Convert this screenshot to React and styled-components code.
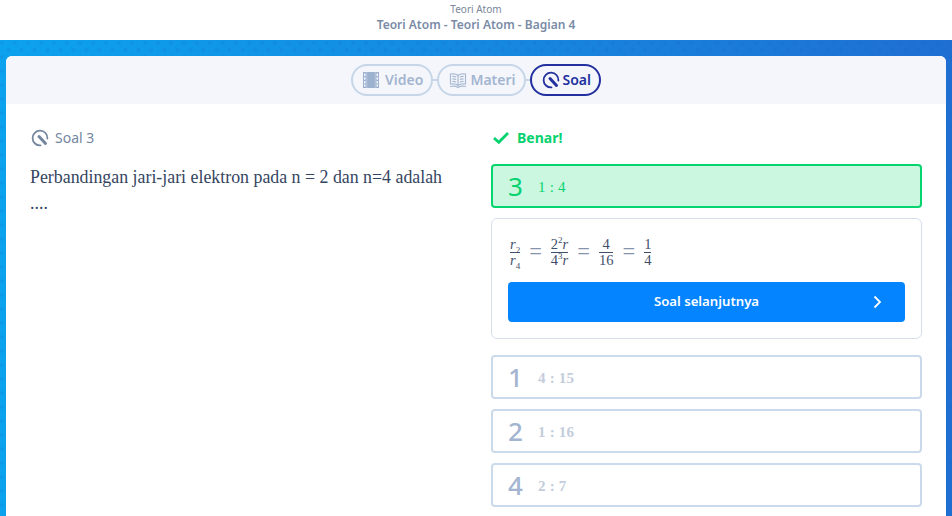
import React from 'react';
import styled, { createGlobalStyle } from 'styled-components';

const GlobalStyle = createGlobalStyle`
  html, body {
    margin: 0;
    padding: 0;
    height: 516px;
    overflow: hidden;
    background: #fff;
    font-family: 'Noto Sans', 'Open Sans', sans-serif;
  }
`;

const Page = styled.div`
  width: 952px;
  height: 516px;
  overflow: hidden;
  display: flex;
  flex-direction: column;
`;

const Header = styled.header`
  height: 40px;
  flex: none;
  background: #fff;
  display: flex;
  flex-direction: column;
  align-items: center;
  padding-top: 2px;
  box-sizing: border-box;
`;

const Crumb = styled.div`
  font-size: 10px;
  line-height: 14px;
  color: #7b8799;
`;

const Title = styled.h1`
  margin: 0;
  font-size: 12px;
  line-height: 18px;
  font-weight: 600;
  color: #7a8ba6;
`;

const Stage = styled.main`
  flex: 1;
  min-height: 0;
  padding: 16px 6px 0;
  background-image:
    radial-gradient(circle at center, rgba(20, 90, 190, 0.13) 0 1.5px, transparent 2.5px),
    radial-gradient(circle at center, rgba(20, 90, 190, 0.13) 0 1.5px, transparent 2.5px),
    linear-gradient(90deg, #0ca2ee, #1f6fd2);
  background-size: 13px 14px, 13px 14px, 100% 100%;
  background-position: 8.5px -4px, 15px 3px, 0 0;
`;

const Card = styled.section`
  height: 100%;
  background: #fff;
  border-radius: 6px 6px 0 0;
  overflow: hidden;
`;

const TabBar = styled.nav`
  height: 48px;
  background: #f4f6fb;
  display: flex;
  align-items: center;
  justify-content: center;
`;

const Tab = styled.div`
  height: 32px;
  box-sizing: border-box;
  border: 2px solid ${p => (p.$active ? '#23309f' : '#c6d6e8')};
  border-radius: 16px;
  padding: 0 8px 2px 10px;
  display: flex;
  align-items: center;
  gap: ${p => p.$gap}px;
  font-size: 14px;
  font-weight: 600;
  color: ${p => (p.$active ? '#23309f' : '#a3b5d0')};
  & svg {
    margin-top: 2px;
  }
`;

const Connector = styled.span`
  width: 4px;
  height: 2px;
  background: #c6d6e8;
`;

const Columns = styled.div`
  display: grid;
  grid-template-columns: 431px 431px;
  column-gap: 30px;
  padding: 24px 24px 0;
`;

const SoalLabel = styled.div`
  height: 20px;
  box-sizing: border-box;
  padding-bottom: 2px;
  margin-left: 1px;
  display: flex;
  align-items: center;
  gap: 6px;
  font-size: 14px;
  color: #74879f;
  & svg {
    margin-top: 2px;
  }
`;

const Question = styled.p`
  margin: 16px 0 0;
  font-family: 'Liberation Serif', serif;
  font-size: 17.85px;
  line-height: 26px;
  color: #34455f;
`;

const Status = styled.div`
  height: 20px;
  box-sizing: border-box;
  padding-bottom: 2px;
  display: flex;
  align-items: center;
  gap: 8px;
  margin-left: 2px;
  font-size: 14px;
  font-weight: 700;
  color: #06d26f;
  & svg {
    margin-top: 2px;
  }
`;

const Answer = styled.div`
  height: 44px;
  box-sizing: border-box;
  margin-top: ${p => p.$mt}px;
  border: 2px solid ${p => (p.$correct ? '#06d56f' : '#cbdaeb')};
  border-radius: 4px;
  background: ${p => (p.$correct ? '#cbf7e1' : '#fff')};
  display: flex;
  align-items: center;
  padding-left: 15px;
  color: ${p => (p.$correct ? '#06d26f' : '#a3b5d0')};
`;

const AnswerKey = styled.span`
  width: 30px;
  font-size: 26px;
  line-height: 32px;
  font-weight: ${p => (p.$correct ? 400 : 500)};
`;

const AnswerText = styled.span`
  padding-top: 2px;
  font-family: 'Liberation Serif', serif;
  font-size: 15px;
  font-weight: ${p => (p.$correct ? 400 : 700)};
  letter-spacing: 0.2px;
  color: ${p => (p.$correct ? '#06d26f' : '#c3cddc')};
`;

const Explain = styled.div`
  margin-top: 10px;
  height: 121px;
  box-sizing: border-box;
  border: 1px solid #d5dfeb;
  border-radius: 6px;
  padding: 16px;
  display: flex;
  flex-direction: column;
`;

const Formula = styled.div`
  height: 32px;
  margin-top: 1px;
  padding-left: 2px;
  display: flex;
  align-items: center;
  gap: 9px;
  font-family: 'Liberation Serif', serif;
  font-size: 14.5px;
  color: #3f4f6b;
`;

const Frac = styled.span`
  display: inline-flex;
  flex-direction: column;
  align-items: center;
  line-height: 14px;
  & > span:first-child {
    border-bottom: 1px solid #3f4f6b;
    padding: 0 0 1px;
    align-self: stretch;
    text-align: center;
  }
`;

const Equals = styled.span`
  font-size: 22.5px;
  line-height: 20px;
  color: #8795aa;
`;

const Italic = styled.i`
  font-style: italic;
`;

const Sub = styled.sub`
  font-size: 9px;
  line-height: 0;
`;

const Sup = styled.sup`
  font-size: 9px;
  line-height: 0;
`;

const NextButton = styled.button`
  margin-top: 15px;
  height: 40px;
  flex: none;
  border: 0;
  border-radius: 4px;
  background: #0584ff;
  color: #fff;
  font-family: inherit;
  font-size: 13.2px;
  font-weight: 600;
  display: grid;
  grid-template-columns: 24px 1fr 24px;
  align-items: center;
  padding: 0 16px 2px;
  text-align: center;
  & svg {
    justify-self: center;
    margin-top: 2px;
  }
`;

const SoalIcon = ({ color, size = 18 }) => (
  <svg width={size} height={size} viewBox="0 0 18 18" fill="none">
    <path d="M9.500 16.400A7.400 7.400 0 1 1 16.400 9.500" stroke={color} strokeWidth="1.800" strokeLinecap="round" />
    <path d="M8 7.500L14.500 14.500" stroke={color} strokeWidth="3" strokeLinecap="round" />
  </svg>
);

const FilmIcon = () => (
  <svg width="16" height="16" viewBox="0 0 16 16">
    <path
      fill="#9db2cf"
      fillRule="evenodd"
      d="M0 0h16v16H0zM1 1.500v2.500h1.500V1.500zM1 5.200v2.500h1.500V5.200zM1 8.900v2.500h1.500V8.900zM1 12.500v2h1.500v-2zM13.500 1.500v2.500H15V1.500zM13.500 5.200v2.500H15V5.200zM13.500 8.900v2.500H15V8.900zM13.500 12.500v2H15v-2z"
    />
    <path fill="#c2d0e3" d="M3.500 0h.7v16h-.7zM11.800 0h.7v16h-.7z" />
  </svg>
);

const BookIcon = () => (
  <svg width="18" height="18" viewBox="0 0 18 18" fill="none" stroke="#a9bad3" strokeWidth="1.200">
    <path d="M9 4.500C7.500 2.800 4.500 2.600 1.500 3v10C4.500 12.600 7.500 12.800 9 14.500c1.500-1.700 4.500-1.900 7.500-1.500V3C13.500 2.600 10.500 2.800 9 4.500zM9 4.500v10" />
    <path d="M3.300 5.500c1.300-.1 2.700 0 3.900.5M3.300 8c1.300-.1 2.700 0 3.900.5M3.300 10.500c1.300-.1 2.700 0 3.900.5M14.700 5.500c-1.300-.1-2.700 0-3.900.5M14.700 8c-1.300-.1-2.700 0-3.900.5M14.700 10.500c-1.300-.1-2.700 0-3.900.5" />
    <path d="M1 15.500c3-.5 6-.4 8 1 2-1.400 5-1.500 8-1" />
  </svg>
);

const CheckIcon = () => (
  <svg width="16" height="12" viewBox="0 0 16 12" fill="none">
    <path d="M1 6L5.800 10.300L15 1" stroke="#06d26f" strokeWidth="2.800" />
  </svg>
);

const ChevronIcon = () => (
  <svg width="9" height="14" viewBox="0 0 9 14" fill="none">
    <path d="M1.500 1.500L7 7L1.500 12.500" stroke="#fff" strokeWidth="1.800" />
  </svg>
);

const answers = [
  { key: '1', text: '4 : 15', mt: 16 },
  { key: '2', text: '1 : 16', mt: 10 },
  { key: '4', text: '2 : 7', mt: 10 }
];

const App = () => (
  <Page>
    <GlobalStyle />
    <Header>
      <Crumb>Teori Atom</Crumb>
      <Title>Teori Atom - Teori Atom - Bagian 4</Title>
    </Header>
    <Stage>
      <Card>
        <TabBar>
          <Tab $gap={6}>
            <FilmIcon />
            Video
          </Tab>
          <Connector />
          <Tab $gap={3}>
            <BookIcon />
            Materi
          </Tab>
          <Connector />
          <Tab $active $gap={3}>
            <SoalIcon color="#23309f" />
            Soal
          </Tab>
        </TabBar>
        <Columns>
          <div>
            <SoalLabel>
              <SoalIcon color="#74879f" />
              Soal 3
            </SoalLabel>
            <Question>Perbandingan jari-jari elektron pada n = 2 dan n=4 adalah ....</Question>
          </div>
          <div>
            <Status>
              <CheckIcon />
              Benar!
            </Status>
            <Answer $correct $mt={16}>
              <AnswerKey $correct>3</AnswerKey>
              <AnswerText $correct>1 : 4</AnswerText>
            </Answer>
            <Explain>
              <Formula>
                <Frac>
                  <span><Italic>r</Italic><Sub>2</Sub></span>
                  <span><Italic>r</Italic><Sub>4</Sub></span>
                </Frac>
                <Equals>=</Equals>
                <Frac>
                  <span>2<Sup>2</Sup><Italic>r</Italic></span>
                  <span>4<Sup>3</Sup><Italic>r</Italic></span>
                </Frac>
                <Equals>=</Equals>
                <Frac>
                  <span>4</span>
                  <span>16</span>
                </Frac>
                <Equals>=</Equals>
                <Frac>
                  <span>1</span>
                  <span>4</span>
                </Frac>
              </Formula>
              <NextButton>
                <span />
                <span>Soal selanjutnya</span>
                <ChevronIcon />
              </NextButton>
            </Explain>
            {answers.map(a => (
              <Answer key={a.key} $mt={a.mt}>
                <AnswerKey>{a.key}</AnswerKey>
                <AnswerText>{a.text}</AnswerText>
              </Answer>
            ))}
          </div>
        </Columns>
      </Card>
    </Stage>
  </Page>
);

export default App;
